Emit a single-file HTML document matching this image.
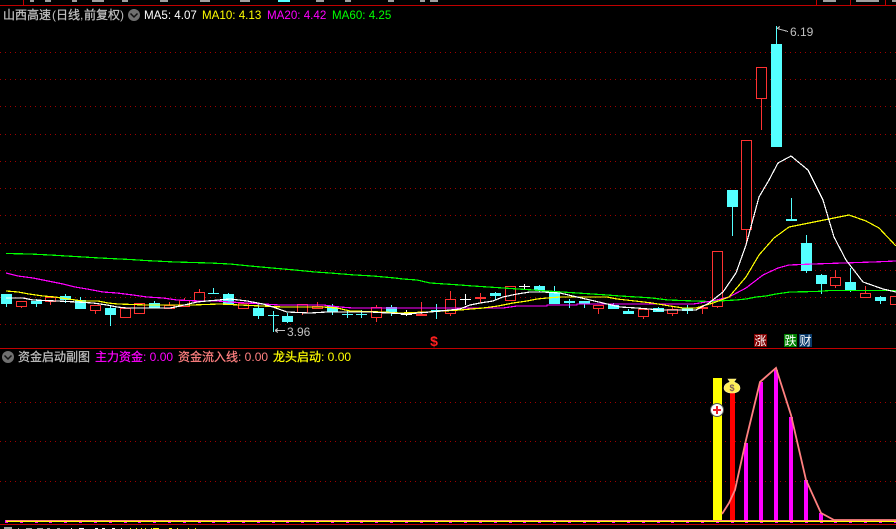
<!DOCTYPE html>
<html lang="zh"><head><meta charset="utf-8"><title>山西高速</title>
<style>
html,body{margin:0;padding:0;background:#000}
body{width:896px;height:529px;overflow:hidden;position:relative}
svg{display:block;position:absolute;left:0;top:0}
text{font-family:"Liberation Sans","WenQuanYi Zen Hei","Noto Sans CJK SC",sans-serif;font-size:12px}
.c{font-family:"WenQuanYi Zen Hei","Noto Sans CJK SC",sans-serif;stroke-width:.25}
.m{font-size:11.6px}
</style></head><body>
<svg width="896" height="529" viewBox="0 0 896 529" xmlns="http://www.w3.org/2000/svg">
<rect width="896" height="529" fill="#000"/>
<g shape-rendering="crispEdges">
<!-- frame -->
<path d="M0 5.500H896M23.500 0V5M816.500 0V5M850.500 0V5M885.500 0V5M0 348.500H896M0 524.500H896" stroke="#c00000" fill="none"/>
<path d="M30 0h4v2h-4zM45 0h6v2h-6zM72 0h5v2h-5zM92 0h12v2h-12zM122 0h6v2h-6zM160 0h8v2h-8zM200 0h10v2h-10zM240 0h10v2h-10zM316 0h8v2h-8zM345 0h6v2h-6zM388 0h6v2h-6zM420 0h5v2h-5zM430 0h8v2h-8zM823 0h13v2h-13zM856 0h23v2h-23zM892 0h4v2h-4z" fill="#a0a0a0"/>
<path d="M278 0h12v2h-12z" fill="#54ffff"/>
<!-- grid -->
<path d="M0 52.500H896M0 79.500H896M0 106.500H896M0 134.500H896M0 161.500H896M0 188.500H896M0 215.500H896M0 243.500H896M0 270.500H896M0 297.500H896M0 324.500H896M0 402.500H896M0 441.500H896M0 481.500H896" stroke="#a00000" stroke-dasharray="1 4" fill="none"/>
<!-- cyan wicks -->
<path d="M6.500 304V307M36.500 299V307M65.500 294V303M80.500 297V300M110.500 305V326M154.500 301V303M213.500 288V293M228.500 293V294M258.500 304V319M273.500 311V332M287.500 313V323M332.500 304V315M347.500 310V318M361.500 310V318M391.500 305V316M436.500 304V319M495.500 292V300M539.500 285V292M554.500 286V293M569.500 299V308M584.500 304V308M613.500 303V305M628.500 309V311M658.500 307V308M687.500 305V314M732.500 207V236M776.500 26V44M791.500 198V219M806.500 235V273M821.500 274V294M850.500 268V292M880.500 296V304" stroke="#54ffff" fill="none"/>
<!-- cyan bodies -->
<path fill="#54ffff" d="M1 294h11v10h-11zM31 301h11v3h-11zM60 296h11v4h-11zM75 300h11v9h-11zM105 308h11v7h-11zM149 303h11v5h-11zM223 294h11v11h-11zM253 308h11v8h-11zM282 316h11v6h-11zM327 306h11v6h-11zM386 307h11v5h-11zM490 293h11v3h-11zM534 286h11v4h-11zM549 293h11v11h-11zM564 301h11v2h-11zM579 301h11v3h-11zM608 305h11v4h-11zM623 311h11v3h-11zM653 308h11v4h-11zM682 308h11v3h-11zM727 190h11v17h-11zM771 44h11v103h-11zM801 243h11v28h-11zM816 275h11v9h-11zM845 282h11v8h-11zM875 297h11v4h-11zM208 293h11v1h-11zM268 315h11v1h-11zM342 314h11v1h-11zM356 314h11v1h-11zM431 310h11v1h-11zM786 219h11v2h-11z"/>
<!-- white dojis -->
<path d="M406.500 310V316M465.500 294V305M524.500 284V289" stroke="#fff" fill="none"/>
<path fill="#fff" d="M401 314h11v1h-11zM460 299h11v1h-11zM519 286h11v1h-11z"/>
<!-- red wicks -->
<path d="M21.500 306V308M50.500 301V305M95.500 310V314M125.500 317V318M139.500 313V314M169.500 302V305M184.500 298V300M199.500 289V292M302.500 312V315M317.500 302V306M376.500 305V307M376.500 317V322M421.500 302V314M450.500 291V299M450.500 313V316M480.500 293V303M598.500 308V314M643.500 316V319M672.500 307V309M672.500 313V316M702.500 305V314M717.500 306V308M746.500 229V243M761.500 98V130M835.500 270V277M835.500 285V288M865.500 286V293" stroke="#ff3232" fill="none"/>
<!-- red hollow bodies -->
<path stroke="#ff3232" fill="#000" d="M16.500 301.500h10v5h-10zM45.500 297.500h10v4h-10zM90.500 305.500h10v5h-10zM120.500 308.500h10v9h-10zM134.500 303.500h10v10h-10zM164.500 305.500h10v3h-10zM179.500 300.500h10v6h-10zM194.500 292.500h10v9h-10zM238.500 303.500h10v5h-10zM297.500 304.500h10v8h-10zM312.500 306.500h10v2h-10zM371.500 307.500h10v10h-10zM416.500 314.500h10v1h-10zM445.500 299.500h10v14h-10zM505.500 286.500h10v14h-10zM593.500 305.500h10v3h-10zM638.500 309.500h10v7h-10zM667.500 309.500h10v4h-10zM712.500 251.500h10v55h-10zM741.500 140.500h10v89h-10zM756.500 67.500h10v31h-10zM830.500 277.500h10v8h-10zM860.500 293.500h10v4h-10zM890.500 296.500h10v8h-10z"/>
<path fill="#ff3232" d="M475 297h11v2h-11zM697 307h11v2h-11z"/>
</g>
<!-- MA lines -->
<g fill="none" shape-rendering="crispEdges" stroke-width="1.2">
<polyline stroke="#00ff00" points="6,253.500 30,254 50,255 75,256.500 100,258 130,259.500 145,260.500 175,262 210,263 230,264 250,266 272,268 295,270 315,272 330,273 355,275 373,276 395,278 403,279 417,280 430,283 460,285 473,286 488,287 503,288 518,289 533,290 547,291 562,292 577,293 592,294 607,295 620,296 637,297 652,298 668,300 695,301 710,301.500 736,300 746,299 756,297 766,296 776,294 790,292 816,291.500 830,290.500 896,290.500"/>
<polyline stroke="#ff00ff" points="6,273 18,276 33,278 43,280 53,282 63,284 75,287 87,289 103,292 117,293 133,295 147,297 163,298 177,300 200,301 217,301 230,302 263,304 280,305 323,305 340,307 353,308 427,308 503,308 517,306 547,306 547,305 577,305 577,304 693,304 700,303 712,301 729,297 746,288 763,275 778,268 789,265 813,264 843,263 873,262 896,261"/>
<polyline stroke="#ffff00" points="6,291 18,292 29,294 43,296 55,297 68,299 83,301 98,301 108,303 118,304 147,305 177,305 192,305 220,304 240,305 283,307 323,307 337,308 350,311 383,312 400,313 427,312 443,311 460,310 483,308 498,306 513,303 527,301 537,299 547,298 560,297 607,297 617,299 635,301 652,303 670,306 683,308 696,308 713,303 729,297 746,277 759,255 774,238 789,227 809,223 829,219 849,215 866,221 879,228 896,246"/>
<polyline stroke="#ffffff" points="6,298 23,298 33,300 57,301 77,302 93,303 107,305 117,307 127,308 170,308 180,306 197,302 207,301 230,299 247,301 263,304 273,307 287,312 310,313 327,312 370,312 407,314 430,312 460,309 470,305 480,303 493,301 503,297 517,294 530,292 543,292 560,293 577,297 590,300 603,303 620,307 637,308 660,310 696,310 709,303 723,292 736,273 746,245 759,197 769,180 778,163 791,156 808,170 823,200 834,237 846,260 863,282 883,289 896,292"/>
</g>
<!-- lower pane -->
<g shape-rendering="crispEdges">
<path fill="#ffff00" d="M713 378h9v144h-9z"/>
<path fill="#ff0000" d="M730 393h5v129h-5z"/>
<path fill="#ff00ff" d="M744 443h4v79h-4zM759 382h4v140h-4zM774 370h4v152h-4zM789 417h4v105h-4zM804 480h4v42h-4zM819 513h4v9h-4z"/>
<path fill="#ff00ff" d="M5 520h3v3h-3zM20 522h3v1h-3zM35 522h3v1h-3zM49 522h3v1h-3zM64 522h3v1h-3zM79 522h3v1h-3zM94 522h3v1h-3zM109 522h3v1h-3zM124 522h3v1h-3zM138 522h3v1h-3zM153 522h3v1h-3zM168 522h3v1h-3zM183 522h3v1h-3zM198 522h3v1h-3zM212 522h3v1h-3zM227 522h3v1h-3zM242 522h3v1h-3zM257 522h3v1h-3zM272 522h3v1h-3zM286 522h3v1h-3zM301 522h3v1h-3zM316 522h3v1h-3zM331 522h3v1h-3zM346 522h3v1h-3zM360 522h3v1h-3zM375 522h3v1h-3zM390 522h3v1h-3zM405 522h3v1h-3zM420 522h3v1h-3zM435 522h3v1h-3zM449 522h3v1h-3zM464 522h3v1h-3zM479 522h3v1h-3zM494 522h3v1h-3zM509 522h3v1h-3zM523 522h3v1h-3zM538 522h3v1h-3zM553 522h3v1h-3zM568 522h3v1h-3zM583 522h3v1h-3zM597 522h3v1h-3zM612 522h3v1h-3zM627 522h3v1h-3zM642 522h3v1h-3zM657 522h3v1h-3zM671 522h3v1h-3zM686 522h3v1h-3zM701 522h3v1h-3zM716 522h3v1h-3zM731 522h3v1h-3zM745 522h3v1h-3zM760 522h3v1h-3zM775 522h3v1h-3zM790 522h3v1h-3zM805 522h3v1h-3zM820 522h3v1h-3zM834 522h3v1h-3zM849 522h3v1h-3zM864 522h3v1h-3zM879 522h3v1h-3zM894 522h2v1h-2z"/>
<path fill="#ff8080" d="M6 520h890v1h-890z"/>
<path fill="#ffff00" d="M6 521h890v1h-890z"/>
</g>
<polyline fill="none" stroke="#ff8080" stroke-width="1.800" points="722,514 729,503 735,490 746,440 760,382 776,368 791,415 806,480 821,513 834,520 896,520"/>
<!-- plus icon -->
<circle cx="717" cy="410" r="6.500" fill="#fff" stroke="#555" stroke-width="1"/>
<path d="M713 409h8v2h-8zM716 406h2v8h-2z" fill="#e8202a"/>
<!-- money bag -->
<path d="M728 379h8l-2 3c3 1 6 3 6 6 0 3-3 5-8 5s-8-2-8-5c0-3 3-5 6-6z" fill="#ffee58" stroke="#fff3a0" stroke-width="0.600"/>
<text x="732" y="391" text-anchor="middle" style="font-size:9px;font-weight:bold" fill="#80605a">$</text>
<!-- badges -->
<g shape-rendering="crispEdges">
<rect x="754" y="334" width="13" height="13" fill="#800000"/>
<rect x="784" y="334" width="13" height="13" fill="#008000"/>
<rect x="799" y="334" width="13" height="13" fill="#0a3a6a"/>
</g>
<g fill="#fff" text-anchor="middle">
<text class="c" x="760.500" y="345">涨</text>
<text class="c" x="790.500" y="345">跌</text>
<text class="c" x="805.500" y="345">财</text>
</g>
<text x="434" y="346" text-anchor="middle" fill="#ff2020" style="font-size:14px;font-weight:bold">$</text>
<!-- price labels -->
<g shape-rendering="crispEdges" fill="none" stroke="#c0c0c0"><path d="M275 330.500H285M275 330.500l3-2M275 330.500l3 2"/><path d="M777 28.500l11 3M777 28.500l3-2"/></g>
<text x="287" y="336" fill="#c0c0c0">3.96</text>
<text x="790" y="36" fill="#c0c0c0">6.19</text>
<!-- header -->
<text class="c" x="3" y="19" fill="#c0c0c0" stroke="#c0c0c0">山西高速</text>
<text x="52" y="19" fill="#c0c0c0">(</text>
<text class="c" x="56" y="19" fill="#c0c0c0" stroke="#c0c0c0">日线</text>
<text x="80" y="19" fill="#c0c0c0">,</text>
<text class="c" x="84" y="19" fill="#c0c0c0" stroke="#c0c0c0">前复权</text>
<text x="120" y="19" fill="#c0c0c0">)</text>
<circle cx="134" cy="15" r="6" fill="#707070"/>
<path d="M130.500 13.500l3.500 3.500 3.500-3.500" fill="none" stroke="#111" stroke-width="1.500"/>
<text class="m" x="144" y="19" fill="#fff">MA5: 4.07</text>
<text class="m" x="202" y="19" fill="#ffff00">MA10: 4.13</text>
<text class="m" x="267" y="19" fill="#ff00ff">MA20: 4.42</text>
<text class="m" x="332" y="19" fill="#00ff00">MA60: 4.25</text>
<circle cx="8" cy="357" r="6" fill="#707070"/>
<path d="M4.500 355.500l3.500 3.500 3.500-3.500" fill="none" stroke="#111" stroke-width="1.500"/>
<text class="c" x="18" y="361" fill="#c0c0c0" stroke="#c0c0c0">资金启动副图</text>
<text x="95" y="361" fill="#ff00ff"><tspan class="c" stroke="#ff00ff">主力资金</tspan>: 0.00</text>
<text x="178" y="361" fill="#ff8080"><tspan class="c" stroke="#ff8080">资金流入线</tspan>: 0.00</text>
<text x="273" y="361" fill="#ffff00"><tspan class="c" stroke="#ffff00">龙头启动</tspan>: 0.00</text>
<!-- clipped bottom text pixels -->
<g shape-rendering="crispEdges">
<path fill="#a0a0a0" d="M4 527h8v2h-8zM18 528h1v1h-1zM26 528h6v1h-6zM37 528h6v1h-6zM47 528h3v1h-3zM57 528h3v1h-3z"/>
<path fill="#fff" d="M71 528h1v1h-1zM79 528h5v1h-5zM95 528h3v1h-3zM102 528h3v1h-3zM112 528h3v1h-3zM121 528h1v1h-1z"/>
<path fill="#ffff00" d="M130 528h1v1h-1zM136 528h1v1h-1zM141 528h1v1h-1zM145 528h1v1h-1zM151 528h1v1h-1zM153 528h6v1h-6zM169 528h3v1h-3zM177 528h1v1h-1zM188 528h1v1h-1zM195 528h1v1h-1z"/>
</g>
</svg>
</body></html>
